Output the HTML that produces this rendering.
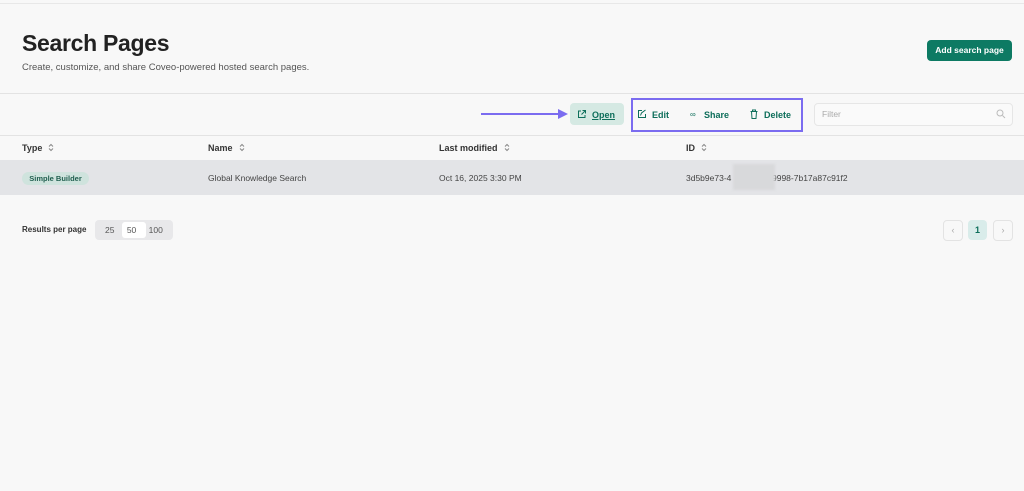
<!DOCTYPE html>
<html><head><style>
body{margin:0;width:1024px;height:491px;background:#f8f8f8;font-family:"Liberation Sans",sans-serif;position:relative;overflow:hidden;color:#333}
.a{position:absolute}
.sort{display:inline-block;width:6px;height:9px;margin-left:6px;vertical-align:-1px}
.th{font-size:9px;font-weight:bold;color:#333;top:143px}
.act{font-size:9px;font-weight:bold;color:#0d6e5a;top:110px}
</style></head><body>
<div class="a" style="left:0;top:3px;width:1024px;border-top:1px solid #e8e8e8"></div>
<div class="a" style="left:22px;top:30px;font-size:23px;font-weight:bold;color:#222;letter-spacing:-0.3px">Search Pages</div>
<div class="a" style="left:22px;top:62px;font-size:9.5px;color:#555">Create, customize, and share Coveo-powered hosted search pages.</div>
<div class="a" style="left:927px;top:40px;width:85px;height:21px;background:#0d7a63;border-radius:4px;color:#fff;font-size:8.5px;font-weight:bold;text-align:center;line-height:21px">Add search page</div>
<div class="a" style="left:0;top:93px;width:1024px;border-top:1px solid #e3e3e3"></div>
<div class="a" style="left:0;top:135px;width:1024px;border-top:1px solid #e3e3e3"></div>
<svg class="a" style="left:478px;top:108px" width="92" height="12"><line x1="3" y1="6" x2="82" y2="6" stroke="#7b6cf0" stroke-width="2"/><polygon points="80,1 90,6 80,11" fill="#7b6cf0"/></svg>
<div class="a" style="left:570px;top:103px;width:54px;height:22px;background:#d5e9e3;border-radius:4px"></div>
<svg class="a" style="left:577px;top:109px" width="10" height="10" fill="none" stroke="#0d6e5a" stroke-width="1"><path d="M4 2H1.5v6.5H8V6M5.5 1.5h3v3M8.5 1.5 4.5 5.5"/></svg>
<div class="a act" style="left:592px;text-decoration:underline">Open</div>
<div class="a" style="left:631px;top:98px;width:168px;height:30px;border:2px solid #7b6cf0"></div>
<svg class="a" style="left:637px;top:109px" width="10" height="10" fill="none" stroke="#0d6e5a" stroke-width="1"><path d="M5 1.5H1.5v7h7V5M3.5 6.5l1-2.5 4-3"/></svg>
<div class="a act" style="left:652px">Edit</div>
<div class="a" style="left:690px;top:110px;font-size:8px;color:#0d6e5a">∞</div>
<div class="a act" style="left:704px">Share</div>
<svg class="a" style="left:749px;top:109px" width="10" height="10" fill="none" stroke="#0d6e5a" stroke-width="1"><path d="M1.5 2.5h7M3.5 2.5V1h3v1.5M2.5 2.5l.5 7h4l.5-7"/></svg>
<div class="a act" style="left:764px">Delete</div>
<div class="a" style="left:814px;top:103px;width:197px;height:21px;border:1px solid #e6e6e6;border-radius:4px;background:#fafafa"></div>
<div class="a" style="left:822px;top:109px;font-size:8.5px;color:#aaa">Filter</div>
<svg class="a" style="left:996px;top:109px" width="10" height="10" fill="none" stroke="#bbb"><circle cx="4" cy="4" r="3"/><path d="M6.5 6.5 9 9"/></svg>
<div class="a th" style="left:22px">Type<svg class="sort" viewBox="0 0 6 9" fill="none" stroke="#888"><path d="M1 3.5 3 1.5 5 3.5M1 5.5 3 7.5 5 5.5"/></svg></div>
<div class="a th" style="left:208px">Name<svg class="sort" viewBox="0 0 6 9" fill="none" stroke="#888"><path d="M1 3.5 3 1.5 5 3.5M1 5.5 3 7.5 5 5.5"/></svg></div>
<div class="a th" style="left:439px">Last modified<svg class="sort" viewBox="0 0 6 9" fill="none" stroke="#888"><path d="M1 3.5 3 1.5 5 3.5M1 5.5 3 7.5 5 5.5"/></svg></div>
<div class="a th" style="left:686px">ID<svg class="sort" viewBox="0 0 6 9" fill="none" stroke="#888"><path d="M1 3.5 3 1.5 5 3.5M1 5.5 3 7.5 5 5.5"/></svg></div>
<div class="a" style="left:0;top:160px;width:1024px;height:35px;background:#e3e4e7"></div>
<div class="a" style="left:22px;top:172px;width:67px;height:13px;background:#cfe3dd;border-radius:7px;font-size:7.5px;font-weight:bold;color:#1f5e4e;text-align:center;line-height:13px">Simple Builder</div>
<div class="a" style="left:208px;top:173px;font-size:8.5px;color:#444">Global Knowledge Search</div>
<div class="a" style="left:439px;top:173px;font-size:8.5px;color:#444">Oct 16, 2025 3:30 PM</div>
<div class="a" style="left:686px;top:173px;font-size:8.5px;color:#444">3d5b9e73-4</div>
<div class="a" style="left:772px;top:173px;font-size:8.5px;color:#444">9998-7b17a87c91f2</div>
<div class="a" style="left:733px;top:164px;width:42px;height:26px;background:#d8d9db;filter:blur(1px)"></div>
<div class="a" style="left:22px;top:225px;font-size:8px;font-weight:bold;color:#333">Results per page</div>
<div class="a" style="left:95px;top:220px;width:78px;height:20px;background:#e8e8ea;border-radius:4px"></div>
<div class="a" style="left:122px;top:222px;width:24px;height:16px;background:#fff;border-radius:3px"></div>
<div class="a" style="left:105px;top:225px;font-size:8.5px;color:#555;word-spacing:10px">25 50 100</div>
<div class="a" style="left:943px;top:220px;width:18px;height:19px;border:1px solid #e3e3e3;border-radius:4px;color:#aaa;font-size:9px;text-align:center;line-height:19px">‹</div>
<div class="a" style="left:968px;top:220px;width:19px;height:20px;background:#d9ecea;border-radius:4px;color:#0d6e5a;font-size:9px;font-weight:bold;text-align:center;line-height:20px">1</div>
<div class="a" style="left:993px;top:220px;width:18px;height:19px;border:1px solid #e3e3e3;border-radius:4px;color:#aaa;font-size:9px;text-align:center;line-height:19px">›</div>
</body></html>
